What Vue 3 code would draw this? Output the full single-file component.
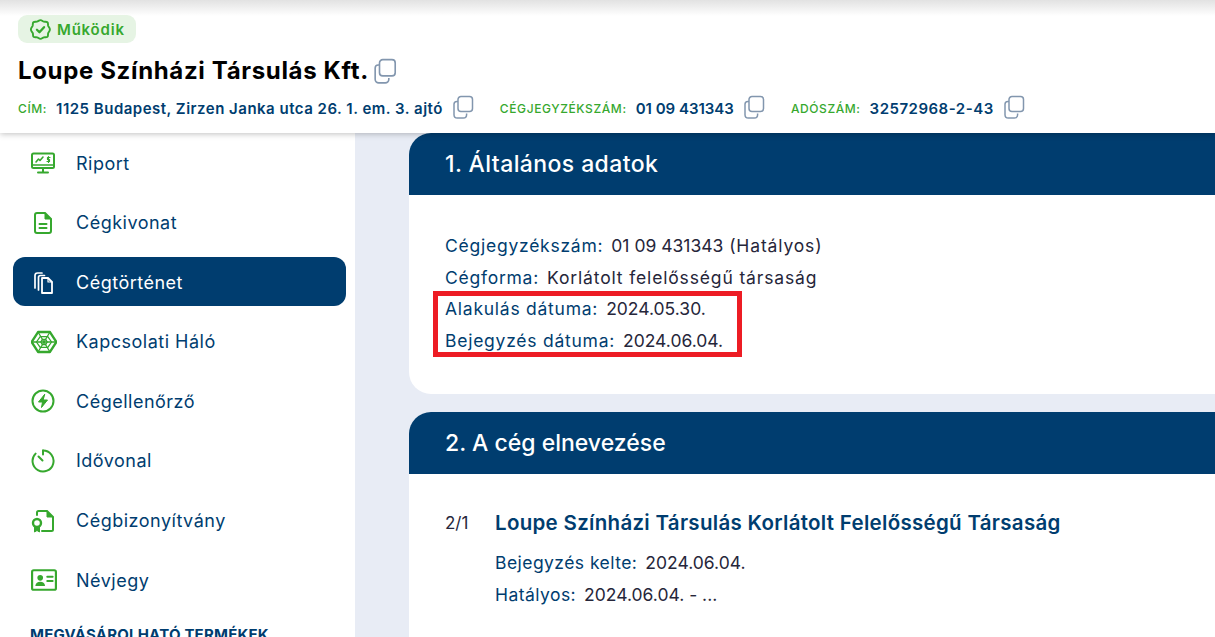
<template>
  <div class="page">
    <header class="top">
      <span class="status">
        <svg viewBox="0 0 24 24" width="23" height="23" fill="none" stroke="#36a82e" stroke-width="2" stroke-linecap="round" stroke-linejoin="round">
          <path d="M12 2.2c1.5 0 2.3 1.3 3.5 1.6 1.3.3 2.7-.3 3.7.6 1 1 .4 2.4.8 3.7.4 1.2 1.8 2.1 1.8 3.9s-1.4 2.7-1.8 3.9c-.4 1.3.2 2.7-.8 3.7-1 .9-2.4.3-3.7.6-1.2.3-2 1.6-3.5 1.6s-2.3-1.3-3.5-1.6c-1.3-.3-2.7.3-3.7-.6-1-1-.4-2.4-.8-3.7C3.4 14.7 2 13.8 2 12s1.4-2.7 1.8-3.9c.4-1.3-.2-2.7.8-3.7 1-.9 2.4-.3 3.7-.6C9.7 3.5 10.5 2.2 12 2.2z" />
          <path d="M8.3 12.3l2.6 2.6 4.8-5.3" stroke-width="2.4" />
        </svg>
        Működik
      </span>
      <div class="name-row">
        <h1>Loupe Színházi Társulás Kft.</h1>
        <svg class="copy" viewBox="0 0 24 24" width="26" height="26"><use href="#copy-icon" /></svg>
      </div>
      <div class="facts">
        <div v-for="fact in facts" :key="fact.label" class="fact">
          <span class="fact-label">{{ fact.label }}:</span>
          <strong :class="{ tight: fact.tight }">{{ fact.value }}</strong>
          <svg class="copy" viewBox="0 0 24 24" width="24" height="24"><use href="#copy-icon" /></svg>
        </div>
      </div>
      <svg width="0" height="0" class="defs">
        <symbol id="copy-icon" viewBox="0 0 24 24">
          <path d="M9 1.5h8.5a3 3 0 0 1 3 3v9a3 3 0 0 1-3 3H9a3 3 0 0 1-3-3v-9a3 3 0 0 1 3-3z" fill="none" stroke="#8296ae" stroke-width="1.5" />
          <path d="M6 6.5H4.8A2.8 2.8 0 0 0 2 9.3v10.4A3.3 3.3 0 0 0 5.3 23h6a3.3 3.3 0 0 0 3.3-3.3v-1.2" fill="none" stroke="#8296ae" stroke-width="1.5" />
        </symbol>
      </svg>
    </header>

    <div class="layout">
      <aside class="side">
        <nav>
          <a v-for="item in nav" :key="item.id" class="nav-item" :class="{ active: item.id === 'history' }">
            <span class="nav-icon" :class="{ wide: item.id === 'network' || item.id === 'card' }">
              <svg viewBox="0 0 24 24" fill="none" stroke="currentColor" stroke-width="2" stroke-linejoin="round" stroke-linecap="round">
                <template v-if="item.id === 'report'">
                  <rect x="1" y="2.5" width="22" height="14.5" rx="1.5" />
                  <path d="M1 14h22" stroke-width="1.5" />
                  <path d="M12 17v3.500M7 21.5h10" />
                  <path d="M5 11l2.5-3 1.5 1.5 3-3.5" stroke-width="1.6" />
                  <path d="M19 6.5h-2.5v2h2v2H16M17.5 5.5v6" stroke-width="1.2" />
                </template>
                <template v-else-if="item.id === 'extract'">
                  <path d="M6 2h8l6 6v12a2 2 0 0 1-2 2H6a2 2 0 0 1-2-2V4a2 2 0 0 1 2-2z" />
                  <path d="M14 2v6h6" fill="currentColor" stroke-width="1" />
                  <path d="M8.5 13h7M8.5 17h7" />
                </template>
                <template v-else-if="item.id === 'history'">
                  <path d="M11 3H6.5A2.5 2.5 0 0 0 4 5.5V18" stroke-width="1.7" />
                  <path d="M13.5 5.5h-4a2 2 0 0 0-2 2V20" stroke-width="1.7" />
                  <path d="M11 8h6l4 4v11H11z" stroke-width="1.8" />
                  <path d="M17 8v4h4" stroke-width="1.2" />
                </template>
                <template v-else-if="item.id === 'network'">
                  <path d="M6.5 2.800h11L23.5 12l-6 9.200h-11L.5 12z" stroke-width="2.2" />
                  <path d="M8.5 7h7L19 12l-3.500 5h-7L5 12zM10.500 9.500h3L15 12l-1.500 2.500h-3L9 12z" stroke-width="1.2" />
                  <path d="M6.500 2.800l11 18.400M17.500 2.800l-11 18.400M.5 12h23" stroke-width="1.2" />
                </template>
                <template v-else-if="item.id === 'check'">
                  <circle cx="12" cy="12" r="10.5" />
                  <path d="M13.5 5.500L7.500 13h4l-1 5.500 6-7.500h-4z" fill="currentColor" stroke-width="1" />
                </template>
                <template v-else-if="item.id === 'timeline'">
                  <path d="M12 1.500A10.500 10.500 0 1 1 4.600 4.600" />
                  <path d="M12 1.500v4M7.500 7.500l4 4" />
                </template>
                <template v-else-if="item.id === 'cert'">
                  <path d="M6 6V3.500A1.500 1.500 0 0 1 7.500 2H16l6 6v12.500a1.500 1.500 0 0 1-1.500 1.500H11" />
                  <path d="M16 2v6h6" fill="currentColor" stroke-width="1" />
                  <circle cx="6" cy="14" r="4" stroke-width="2.4" />
                  <path d="M3.500 18v5l2.500-1.500L8.500 23v-5" fill="currentColor" stroke-width="1" />
                </template>
                <template v-else>
                  <rect x="1" y="3" width="22" height="18" rx="1.5" />
                  <circle cx="8.5" cy="10" r="2.6" fill="currentColor" stroke="none" />
                  <path d="M4 17.500c.3-3 2-4 4.500-4s4.200 1 4.500 4z" fill="currentColor" stroke="none" />
                  <path d="M15 9h5M15 13h5" stroke-width="1.8" />
                </template>
              </svg>
            </span>
            {{ item.label }}
          </a>
        </nav>
        <div class="side-heading">MEGVÁSÁROLHATÓ TERMÉKEK</div>
      </aside>

      <main class="main">
        <section class="card">
          <h2>1. Általános adatok</h2>
          <div class="card-body">
            <p v-for="row in general" :key="row.label" class="line">
              {{ row.label }}:<span class="num">{{ row.num }}</span><span class="val">{{ row.value }}</span>
            </p>
            <div class="marker"></div>
          </div>
        </section>
        <section class="card">
          <h2 class="snug">2. A cég elnevezése</h2>
          <div class="entry">
            <span class="entry-no">2/1</span>
            <div>
              <h3>Loupe Színházi Társulás Korlátolt Felelősségű Társaság</h3>
              <p class="line">Bejegyzés kelte:<span class="num">2024.06.04.</span></p>
              <p class="line">Hatályos:<span class="num">2024.06.04. - ...</span></p>
            </div>
          </div>
        </section>
      </main>
    </div>
  </div>
</template>

<script setup>
const facts = [
  { label: 'Cím', value: '1125 Budapest, Zirzen Janka utca 26. 1. em. 3. ajtó' },
  { label: 'Cégjegyzékszám', value: '01 09 431343', tight: true },
  { label: 'Adószám', value: '32572968-2-43' },
]

const nav = [
  { id: 'report', label: 'Riport' },
  { id: 'extract', label: 'Cégkivonat' },
  { id: 'history', label: 'Cégtörténet' },
  { id: 'network', label: 'Kapcsolati Háló' },
  { id: 'check', label: 'Cégellenőrző' },
  { id: 'timeline', label: 'Idővonal' },
  { id: 'cert', label: 'Cégbizonyítvány' },
  { id: 'card', label: 'Névjegy' },
]

const general = [
  { label: 'Cégjegyzékszám', num: '01 09 431343', value: ' (Hatályos)' },
  { label: 'Cégforma', value: 'Korlátolt felelősségű társaság' },
  { label: 'Alakulás dátuma', num: '2024.05.30.' },
  { label: 'Bejegyzés dátuma', num: '2024.06.04.' },
]
</script>

<style>
html,
body {
  margin: 0;
  overflow: hidden;
}
</style>

<style scoped>
.page {
  width: 1215px;
  height: 637px;
  overflow: hidden;
  display: flex;
  flex-direction: column;
  background: #e8ecf5;
  font-family: Inter, "Open Sans", sans-serif;
  color: #003d6f;
}

.top {
  height: 133px;
  flex: none;
  box-sizing: border-box;
  padding: 15px 18px 0;
  background: linear-gradient(#e2e2e2, #fff 16px);
  box-shadow: 0 1px 6px rgba(0, 0, 0, 0.25);
  position: relative;
  z-index: 2;
}

.defs {
  position: absolute;
}

.status {
  display: inline-flex;
  align-items: center;
  gap: 5px;
  width: 118px;
  height: 28px;
  box-sizing: border-box;
  padding-left: 11px;
  border-radius: 9px;
  background: #e6f4e4;
  color: #36a82e;
  font-size: 15px;
  font-weight: 600;
  letter-spacing: 0.8px;
}

.name-row {
  display: flex;
  align-items: center;
  gap: 4px;
  margin-top: 9px;
  height: 34px;
}

h1 {
  margin: 0;
  font-size: 24px;
  font-weight: 700;
  color: #000;
  letter-spacing: 0.65px;
}

.copy {
  flex: none;
}

.facts {
  display: flex;
  align-items: center;
  margin-top: 8px;
  height: 26px;
}

.fact {
  display: flex;
  align-items: center;
  margin-right: 24px;
}

.fact .copy {
  margin-top: -3px;
}

.fact-label {
  font-size: 12px;
  font-weight: 500;
  letter-spacing: 0.6px;
  text-transform: uppercase;
  color: #36a82e;
  margin-right: 9px;
}

.fact strong {
  font-size: 15px;
  font-weight: 600;
  letter-spacing: 0.5px;
  margin-right: 9px;
}

.fact strong.tight {
  letter-spacing: 0;
}

.layout {
  flex: 1;
  display: flex;
  min-height: 0;
}

.side {
  width: 355px;
  flex: none;
  box-sizing: border-box;
  padding: 5px 9px 0 13px;
  background: #fff;
}

.nav-item {
  display: flex;
  align-items: center;
  gap: 21px;
  height: 49px;
  box-sizing: border-box;
  padding: 1px 0 0 18px;
  margin-bottom: 10.6px;
  border-radius: 12px;
  font-size: 18px;
  letter-spacing: 0.5px;
}

.nav-item.active {
  background: #003d6f;
  color: #fff;
}

.nav-icon {
  width: 24px;
  height: 24px;
  flex: none;
  color: #36a82e;
}

.nav-icon svg {
  display: block;
  width: 24px;
  height: 24px;
}

.nav-icon.wide svg {
  width: 26px;
  height: 26px;
  margin-top: -1px;
}

.active .nav-icon {
  color: #fff;
}

.side-heading {
  margin: 21px 0 0 17px;
  font-size: 15px;
  font-weight: 700;
  letter-spacing: 0.2px;
  white-space: nowrap;
}

.main {
  flex: 1;
  min-width: 0;
  padding-left: 54px;
}

.card {
  background: #fff;
  border-radius: 22px 0 0 22px;
  overflow: hidden;
  height: 261px;
  margin-bottom: 18px;
}

h2 {
  margin: 0;
  height: 62px;
  display: flex;
  align-items: center;
  padding-left: 36px;
  background: #003d6f;
  color: #fff;
  font-size: 23px;
  font-weight: 500;
  letter-spacing: 0.4px;
}

h2.snug {
  letter-spacing: 0;
}

.card-body {
  position: relative;
  padding: 35px 0 0 36px;
}

.line {
  margin: 0;
  height: 31.7px;
  line-height: 31.7px;
  font-size: 17.5px;
  letter-spacing: 0.75px;
  white-space: nowrap;
}

.entry .line {
  letter-spacing: 0.45px;
}

.num {
  margin-left: 8px;
  color: #26263a;
  letter-spacing: 0;
}

.val {
  color: #26263a;
  white-space: pre;
  letter-spacing: 0.85px;
}

.num:empty {
  margin-left: 0;
}

.num:empty + .val {
  margin-left: 8px;
}

/* annotation drawn over the screenshot */
.marker {
  position: absolute;
  left: 24px;
  top: 96px;
  width: 299px;
  height: 56px;
  border: 5px solid #ed1c24;
}

.entry {
  display: flex;
  padding: 31px 0 0 36px;
}

.entry-no {
  width: 50px;
  font-size: 17px;
  line-height: 36px;
  color: #26263a;
}

h3 {
  margin: 0 0 6px;
  height: 36px;
  line-height: 36px;
  font-size: 20.5px;
  font-weight: 600;
  letter-spacing: 0.3px;
}
</style>
